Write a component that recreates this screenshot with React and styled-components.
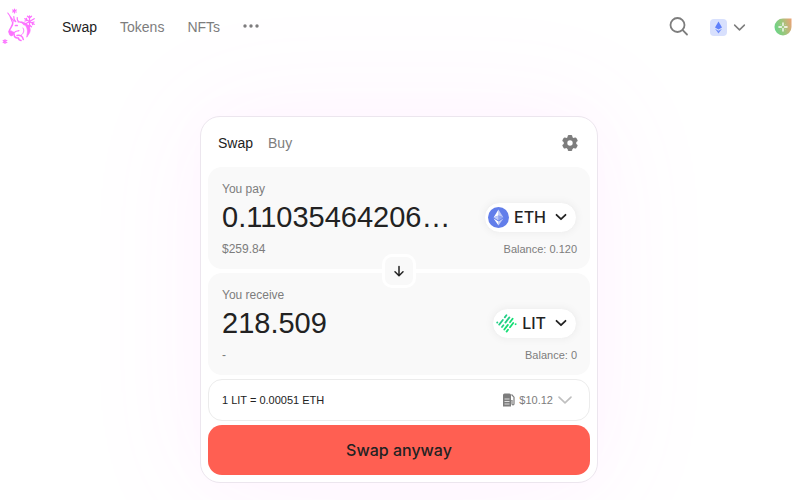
import React, { useState } from 'react'
import styled, { createGlobalStyle } from 'styled-components'

const GlobalStyle = createGlobalStyle`
  * {
    box-sizing: border-box;
  }
  body {
    margin: 0;
    background-color: #ffffff;
    color: #222222;
    font-family: "Liberation Sans", Arial, sans-serif;
    overflow-x: hidden;
  }
  button, input {
    font-family: inherit;
    color: inherit;
  }
`;

const SIDES = [
  { id: 'pay', label: 'You pay', amount: '0.11035464206…', fiat: '$259.84', balance: '0.120', symbol: 'ETH' },
  { id: 'receive', label: 'You receive', amount: '218.509', fiat: '-', balance: '0', symbol: 'LIT' },
];

const Unicorn = () => (
  <svg width="36" height="44" viewBox="0 5 36 44" fill="none" stroke="#fc72ff" strokeLinecap="round" strokeLinejoin="round">
    <path d="M14.5 9v4M12.7 10l3.6 2M16.3 10l-3.6 2" strokeWidth="1.2" />
    <path d="M5 39.5v4M3.2 40.5l3.6 2M6.8 40.5l-3.6 2" strokeWidth="1.2" />
    <path d="M29.5 16v11M24.800 18.700l9.400 5.600M34.200 18.700l-9.400 5.600M27.500 16.300l2 1.800 2-1.800M27.500 26.700l2-1.800 2 1.800M25 21l1.800-.6-.4-2M34 22l-1.800.6.4 2" strokeWidth="1.3" />
    <path d="M7.800 13l6.200 8.500M10 16.500l2.500 6" strokeWidth="1.100" />
    <path d="M13.800 16.500c-.3 2 .4 3.800 2 5.200M17.200 17.500c-.2 1.600.2 3 1.200 4" strokeWidth="1.200" />
    <path d="M12.800 22.500c.4 3.500-3.300 5.500-3.800 9.500" strokeWidth="1.500" />
    <path d="M9.200 31.500c.6-1.200 2-1 2.800-.2.900.9 2 1 3.600.2-1 1.500-2.300 4.400-4.200 4.400-1.800 0-2.900-2.400-2.200-4.400z" fill="#fc72ff" strokeWidth=".6" />
    <path d="M18 22c3-.5 5 .8 6.300 3M15.600 31.500c1.600-.6 2.600-.3 3.400-1" strokeWidth="1.100" />
    <path d="M22 22c4.500.8 8.300 4.200 8.200 8.300-.1 2.700-1.900 4.200-3.400 6.900.2-3 .8-4.700.6-7-.3-3.200-2.400-6.200-5.400-8.200z" fill="#fc72ff" strokeWidth=".7" />
    <path d="M23 28c1.700 2.500.5 5.300-1.500 7" strokeWidth="1" />
    <path d="M14.200 34.500c-.3 2 1.300 3.800 3.800 3.500M17 35.500c3-.8 5.800.5 6.300 4M18.500 38c0 1.300.9 2.200 2.500 2.500" strokeWidth="1.500" />
    <path d="M15.500 25.500h1.700" strokeWidth="1.700" />
  </svg>
);

const SearchIcon = () => (
  <svg width="20" height="20" viewBox="0 0 20 20" fill="none" stroke="#7d7d7d" strokeWidth="1.8" strokeLinecap="round">
    <circle cx="8.500" cy="8" r="7" />
    <path d="M13.700 13.200L18 17.500" />
  </svg>
);

const Chevron = ({ size, color, weight }) => (
  <svg width={size} height={size} viewBox="0 0 12 12" fill="none" stroke={color} strokeWidth={weight} strokeLinecap="round" strokeLinejoin="round">
    <path d="M1.500 3.800L6 8.200l4.500-4.400" />
  </svg>
);

const NetworkIcon = () => (
  <svg width="17" height="17" viewBox="0 0 17 17">
    <rect width="17" height="17" rx="4" fill="#d8e0fd" />
    <path d="M8.500 2.500l3.500 6-3.500 2-3.500-2z" fill="#5f80fb" />
    <path d="M5 9.700l3.500 2 3.500-2-3.500 4.800z" fill="#7390fb" />
  </svg>
);

const Avatar = () => (
  <svg width="18" height="18" viewBox="0 0 18 18">
    <defs>
      <linearGradient id="avatar" x1="0" y1=".6" x2="1" y2=".3">
        <stop offset="0" stopColor="#6ad487" />
        <stop offset=".5" stopColor="#9cc67c" />
        <stop offset="1" stopColor="#e5a577" />
      </linearGradient>
    </defs>
    <path d="M9 .5H17.500V9A8.500 8.500 0 1 1 9 .5z" fill="url(#avatar)" />
    <path d="M9 4.900v2.600M9 10.500v2.600M4.900 9h2.600M10.500 9h2.600" stroke="#fff" strokeWidth="1.300" strokeLinecap="round" />
    <path d="M6.600 6.600l.5.5M11.400 6.600l-.5.5M6.600 11.400l.5-.5M11.400 11.400l-.5-.5" stroke="#d5e8c8" strokeWidth=".7" />
  </svg>
);

const Gear = () => (
  <svg width="18" height="18" viewBox="0 0 18 18">
    <g fill="#7d7d7d">
      <circle cx="9" cy="9" r="6.300" />
      <rect x="6.700" y="1" width="4.600" height="16" rx="1.200" />
      <rect x="6.700" y="1" width="4.600" height="16" rx="1.200" transform="rotate(60 9 9)" />
      <rect x="6.700" y="1" width="4.600" height="16" rx="1.200" transform="rotate(120 9 9)" />
    </g>
    <circle cx="9" cy="9" r="2.700" fill="#ffffff" />
  </svg>
);

const EthIcon = () => (
  <svg width="21" height="21" viewBox="0 0 21 21">
    <circle cx="10.500" cy="10.500" r="10.500" fill="#627eea" />
    <path d="M10.500 2.600v5.800l4.900 2.200z" fill="#c0cbf7" />
    <path d="M10.500 2.600L5.600 10.600l4.900-2.200z" fill="#fff" />
    <path d="M10.500 8.400v5.100l4.900-2.900z" fill="#8fa3f0" />
    <path d="M10.500 8.400v5.100l-4.900-2.900z" fill="#c0cbf7" />
    <path d="M10.500 14.500v3.900l4.900-6.800z" fill="#c0cbf7" />
    <path d="M10.500 14.500v3.900l-4.900-6.800z" fill="#fff" />
  </svg>
);

const LitIcon = () => (
  <svg width="21" height="21" viewBox="0 0 21 21" fill="none" strokeWidth="1.800" strokeLinecap="round">
    <g stroke="#22cf86">
      <path d="M1.200 9.600l.1-.1M3.200 11.600l3.600-4.600M8.800 4.400l1.600-2.100" />
      <path d="M6 14l1.400-1.800M9.400 9.600l4-5.200" />
    </g>
    <g stroke="#14de74">
      <path d="M8.300 16.500l3.600-4.600M14 9.200l2.600-3.400" />
      <path d="M10.600 18.600l1.400-1.800M14 14.200l3.200-4.200M19.600 11.200l.1-.1" />
    </g>
  </svg>
);

const ArrowDown = () => (
  <svg width="14" height="14" viewBox="0 0 14 14" fill="none" stroke="#222222" strokeWidth="1.500" strokeLinecap="round" strokeLinejoin="round">
    <path d="M7 2.500v9M3 7.800l4 3.900 4-3.900" />
  </svg>
);

const GasIcon = () => (
  <svg width="12" height="14" viewBox="0 0 12 14">
    <path d="M1.500.5h5A1.500 1.500 0 0 1 8 2v11.500H0V2A1.500 1.500 0 0 1 1.500.5z" fill="#7d7d7d" />
    <path d="M1.500 6h5M1.500 8.500h5M1.500 11h5" stroke="#e8e8e8" strokeWidth=".9" />
    <path d="M8.500 1.500l2.500 2.700v6.500c0 1.500-2 1.500-2 0V7.500H8.200" fill="none" stroke="#7d7d7d" strokeWidth="1.200" />
  </svg>
);

const tokenIcons = { ETH: <EthIcon />, LIT: <LitIcon /> };

const TokenPanel = ({ id, label, amount, fiat, balance, symbol }) => {
  const [value, setValue] = useState(amount);
  return (
    <Panel>
      <PanelLabel htmlFor={id}>{label}</PanelLabel>
      <AmountRow>
        <AmountInput id={id} type="text" value={value} onChange={(e) => setValue(e.target.value)} />
        <TokenButton type="button">
          {tokenIcons[symbol]}
          <span>{symbol}</span>
          <Chevron size={12} color="#222222" weight={1.8} />
        </TokenButton>
      </AmountRow>
      <PanelFooter>
        <span>{fiat}</span>
        <Balance>Balance: {balance}</Balance>
      </PanelFooter>
    </Panel>
  );
};

function App() {
  return (
    <>
      <GlobalStyle />
      <Header>
        <LogoLink href="#" aria-label="Home"><Unicorn /></LogoLink>
        <Nav>
          <NavLink href="#swap" $active>Swap</NavLink>
          <NavLink href="#tokens">Tokens</NavLink>
          <NavLink href="#nfts">NFTs</NavLink>
          <IconButton type="button" aria-label="More">
            <svg width="16" height="16" viewBox="0 0 16 16" fill="#7d7d7d">
              <circle cx="2" cy="7" r="1.700" />
              <circle cx="8" cy="7" r="1.700" />
              <circle cx="14" cy="7" r="1.700" />
            </svg>
          </IconButton>
        </Nav>
        <Actions>
          <IconButton type="button" aria-label="Search"><SearchIcon /></IconButton>
          <IconButton type="button" aria-label="Network">
            <NetworkIcon />
            <Chevron size={13} color="#7d7d7d" weight={1.4} />
          </IconButton>
          <IconButton type="button" aria-label="Account"><Avatar /></IconButton>
        </Actions>
      </Header>
      <Main>
        <Card>
          <CardHeader>
            <Tab type="button" $active>Swap</Tab>
            <Tab type="button">Buy</Tab>
            <SettingsButton type="button" aria-label="Settings"><Gear /></SettingsButton>
          </CardHeader>
          <TokenPanel {...SIDES[0]} />
          <SwitchButton type="button" aria-label="Switch tokens"><ArrowDown /></SwitchButton>
          <TokenPanel {...SIDES[1]} />
          <RateButton type="button">
            <span>1 LIT = 0.00051 ETH</span>
            <Gas>
              <GasIcon />
              <span>$10.12</span>
              <Chevron size={16} color="#bfbfbf" weight={1.2} />
            </Gas>
          </RateButton>
          <SubmitButton type="button">Swap anyway</SubmitButton>
        </Card>
      </Main>
    </>
  );
}

export default App;

const Header = styled.header`
  display: flex;
  align-items: center;
  height: 54px;
  padding: 0 8px 0 0;
`;

const LogoLink = styled.a`
  display: flex;
  margin-right: 26px;
`;

const Nav = styled.nav`
  display: flex;
  align-items: center;
  gap: 23px;
`;

const NavLink = styled.a`
  font-size: 14px;
  line-height: 20px;
  text-decoration: none;
  color: ${({ $active }) => ($active ? '#222222' : '#7d7d7d')};
`;

const IconButton = styled.button`
  display: flex;
  align-items: center;
  gap: 6px;
  padding: 0;
  border: none;
  background: none;
  cursor: pointer;
`;

const Actions = styled.div`
  display: flex;
  align-items: center;
  margin-left: auto;

  button:nth-child(2) {
    margin: 0 28px 0 21px;
  }
`;

const Main = styled.main`
  display: flex;
  justify-content: center;
  padding: 62px 2px 17px 0;
`;

const Card = styled.section`
  display: flex;
  flex-direction: column;
  width: 100%;
  max-width: 398px;
  padding: 0 7px 7px;
  border: 1px solid #ece6ee;
  border-radius: 20px;
  background-color: #ffffff;
  box-shadow: 0 0 120px 8px rgba(252, 114, 255, 0.07), 0 0 40px rgba(252, 114, 255, 0.03);
`;

const CardHeader = styled.div`
  display: flex;
  align-items: center;
  gap: 15px;
  height: 50px;
  padding: 2px 11px 0 10px;
`;

const Tab = styled.button`
  padding: 0;
  border: none;
  background: none;
  font-size: 14px;
  line-height: 20px;
  cursor: pointer;
  color: ${({ $active }) => ($active ? '#222222' : '#7d7d7d')};
`;

const SettingsButton = styled(IconButton)`
  margin-left: auto;
`;

const Panel = styled.div`
  display: flex;
  flex-direction: column;
  padding: 14px 13px 12px 14px;
  border-radius: 14px;
  background-color: #f9f9f9;
`;

const PanelLabel = styled.label`
  font-size: 12px;
  line-height: 16px;
  color: #7d7d7d;
`;

const AmountRow = styled.div`
  display: flex;
  align-items: center;
  gap: 8px;
  height: 40px;
  margin-bottom: 4px;
`;

const AmountInput = styled.input`
  flex: 1;
  min-width: 0;
  height: 36px;
  padding: 0;
  border: none;
  outline: none;
  background: none;
  font-size: 29px;
`;

const TokenButton = styled.button`
  display: flex;
  align-items: center;
  gap: 5px;
  height: 31px;
  padding: 0 9px 0 3px;
  border: 1px solid #f2f2f2;
  border-radius: 16px;
  background-color: #ffffff;
  box-shadow: 0 0 8px rgba(0, 0, 0, 0.05);
  font-family: Inter, sans-serif;
  font-size: 16px;
  font-weight: 500;
  cursor: pointer;

  span {
    margin-right: 4px;
  }
`;

const PanelFooter = styled.div`
  display: flex;
  justify-content: space-between;
  font-size: 12px;
  line-height: 16px;
  color: #7d7d7d;
`;

const Balance = styled.span`
  font-size: 11px;
`;

const SwitchButton = styled.button`
  display: flex;
  align-items: center;
  justify-content: center;
  align-self: center;
  position: relative;
  width: 34px;
  height: 34px;
  margin: -15px 0;
  padding: 0;
  border: 3px solid #ffffff;
  border-radius: 10px;
  background-color: #f9f9f9;
  cursor: pointer;
`;

const RateButton = styled.button`
  display: flex;
  align-items: center;
  justify-content: space-between;
  height: 42px;
  margin: 4px 0;
  padding: 0 16px 0 13px;
  border: 1px solid #ececec;
  border-radius: 14px;
  background-color: #ffffff;
  font-size: 11px;
  cursor: pointer;
`;

const Gas = styled.span`
  display: flex;
  align-items: center;
  gap: 4px;
  color: #7d7d7d;
`;

const SubmitButton = styled.button`
  height: 50px;
  padding: 0;
  border: none;
  border-radius: 14px;
  background-color: #ff5f52;
  font-family: Inter, sans-serif;
  font-size: 16px;
  font-weight: 500;
  cursor: pointer;
`;
